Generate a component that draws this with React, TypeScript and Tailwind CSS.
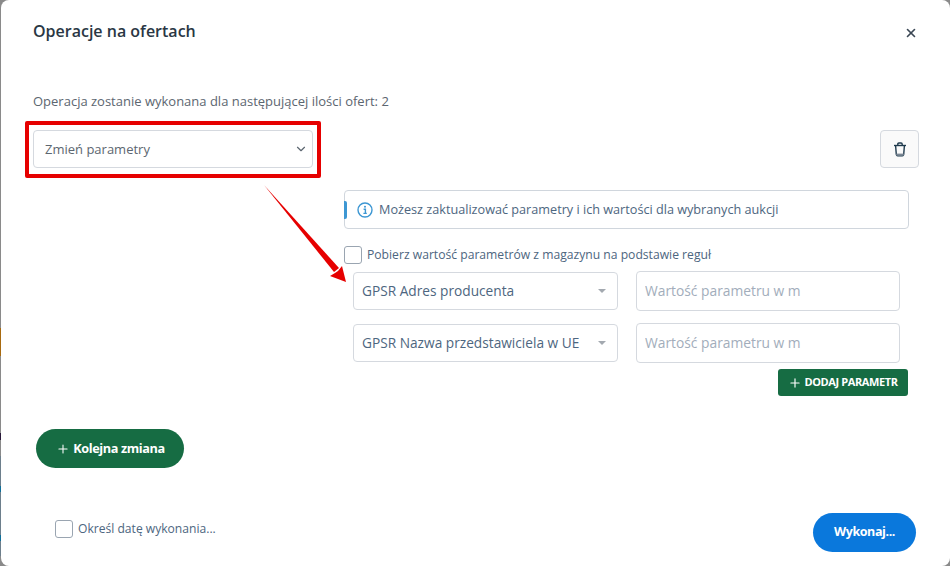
import { ChevronDown, Plus, X } from "lucide-react";

function Trash() {
  return (
    <svg width="14" height="15" viewBox="0 0 14 15" fill="none" stroke="#1f3a4d" strokeWidth="1.4">
      <path d="M1 3.5h12" />
      <path d="M4.8 3.2V2.2c0-.7.4-1.2 1.1-1.2h2.2c.7 0 1.1.5 1.1 1.2v1" />
      <path d="M2.6 3.5l.7 9c.1.9.6 1.4 1.4 1.4h4.6c.8 0 1.3-.5 1.4-1.4l.7-9" />
      <path d="M3.2 12.6h7.6" stroke="#7b8794" strokeWidth="2" />
    </svg>
  );
}

function ParamRow({ label }: { label: string }) {
  return (
    <div className="flex items-center ml-[9px] w-[547px] justify-between">
      <div className="w-[265px] h-[38px] border border-[#d5d9df] rounded-[4px] flex items-center justify-between pl-[8px] pr-[11px] text-[13.7px] text-[#4d6680]">
        <span className="pt-px">{label}</span>
        <span className="w-0 h-0 border-x-[4px] border-x-transparent border-t-[4px] border-t-[#a3a9b0]" />
      </div>
      <div className="w-[264px] h-[40px] border border-[#d5d9df] rounded-[4px] flex items-center pl-[8px] text-[13.8px] text-[#a2adbb]">
        <span className="w-[156px] overflow-hidden whitespace-nowrap pt-px">Wartość parametru w m</span>
      </div>
    </div>
  );
}

export default function App() {
  return (
    <div className="relative w-[950px] h-[566px] bg-[#8a8a8a] overflow-hidden font-['Open_Sans','Noto_Sans',sans-serif] pl-px">
      <div className="absolute left-0 top-[328px] w-px h-[28px] bg-[#a86a10]" />
      <div className="absolute left-0 top-[433px] w-px h-[7px] bg-[#2a1a3a]" />
      <div className="absolute left-0 top-[456px] w-px h-[100px] bg-[#6d7f8c]" />
      <div className="absolute left-0 top-[486px] w-px h-[6px] bg-[#0f6f9a]" />
      <div className="absolute left-0 top-[535px] w-px h-[6px] bg-[#0f6f9a]" />
      <div className="relative w-[949px] h-[566px] bg-white rounded-[8px] pt-[21px]">
        <div className="flex items-center justify-between pl-[32px] pr-[33px] h-[20px]">
          <h2 className="text-[16px] leading-[20px] font-semibold text-[#2a3744]">Operacje na ofertach</h2>
          <X size={14} strokeWidth={2.8} className="text-[#3a4754] mt-[3px] -mr-px" />
        </div>

        <p className="mt-[51px] pl-[32px] text-[13px] leading-[18px] text-[#5c6670]">
          Operacja zostanie wykonana dla następującej ilości ofert: 2
        </p>

        <div className="mt-[20px] flex justify-between pl-[32px] pr-[31px]">
          <div className="w-[280px] h-[38px] border border-[#d5d9df] rounded-[4px] flex items-center justify-between pl-[11px] pr-[4px] text-[13px] text-[#5c6670]">
            <span className="pt-px">Zmień parametry</span>
            <ChevronDown size={14} className="text-[#5c6670]" />
          </div>
          <button className="w-[39px] h-[38px] border border-[#d5d9df] rounded-[4px] bg-[#fafafa] flex items-center justify-center">
            <Trash />
          </button>
        </div>

        <div className="mt-[22px] ml-[343px] w-[565px]">
          <div className="relative h-[39px] border border-[#d0d6dd] rounded-[4px] flex items-center pl-[12px] gap-[6px] text-[12.67px] text-[#4d6680]">
            <span className="absolute -left-px top-[10px] w-[3px] h-[18px] bg-[#3d97d3] rounded-r-[2px]" />
            <svg width="16" height="16" viewBox="0 0 16 16" fill="none">
              <circle cx="8" cy="8" r="7" stroke="#3d97d3" strokeWidth="1.4" />
              <circle cx="8" cy="4.8" r="1" fill="#3d97d3" />
              <path d="M6.6 7.2H8.4V11.2M6.4 11.4H9.8" stroke="#3d97d3" strokeWidth="1.4" />
            </svg>
            <span>Możesz zaktualizować parametry i ich wartości dla wybranych aukcji</span>
          </div>

          <label className="mt-[17px] flex items-center gap-[5px] h-[18px] text-[12.15px] text-[#4d6680]">
            <span className="w-[18px] h-[18px] border border-[#9aa5b1] rounded-[3px] bg-white" />
            Pobierz wartość parametrów z magazynu na podstawie reguł
          </label>

          <div className="mt-[7px] flex flex-col gap-[12px]">
            <ParamRow label="GPSR Adres producenta" />
            <ParamRow label="GPSR Nazwa przedstawiciela w UE" />
          </div>

          <div className="mt-[6px] flex justify-end pr-px">
            <button className="w-[130px] h-[27px] bg-[#166c43] rounded-[3px] flex items-center justify-center gap-[2px] text-white text-[11px] font-bold tracking-[-0.4px]">
              <Plus size={14} strokeWidth={2} />
              DODAJ PARAMETR
            </button>
          </div>
        </div>

        <button className="mt-[33px] ml-[35px] w-[148px] h-[39px] bg-[#166c43] rounded-full flex items-center justify-center gap-[3px] text-white text-[12.7px] font-bold tracking-[-0.4px] pl-px">
          <Plus size={14} strokeWidth={1.8} />
          Kolejna zmiana
        </button>

        <div className="mt-[45px] flex items-center justify-between pl-[54px] pr-[34px]">
          <label className="flex items-center gap-[5px] text-[12.1px] text-[#4d6680] mb-[6px]">
            <span className="w-[18px] h-[18px] border border-[#9aa5b1] rounded-[3px] bg-white" />
            Określ datę wykonania...
          </label>
          <button className="w-[103px] h-[39px] bg-[#0a78dc] rounded-full text-white text-[12.5px] font-bold tracking-[-0.4px]">
            Wykonaj...
          </button>
        </div>

        <div className="absolute left-[24px] top-[121px] w-[296px] h-[57px] border-[4px] border-[#e60000] rounded-[2px] pointer-events-none" />
        <svg className="absolute left-[263px] top-[184px] pointer-events-none" width="86" height="100" viewBox="0 0 86 100" fill="none">
          <path d="M0 1 L70 88 L75 84 Z" fill="#e60000" />
          <path d="M66 92 L82 98 L78 82 L74 87 L71 89 Z" fill="#e60000" />
        </svg>
      </div>
    </div>
  );
}
